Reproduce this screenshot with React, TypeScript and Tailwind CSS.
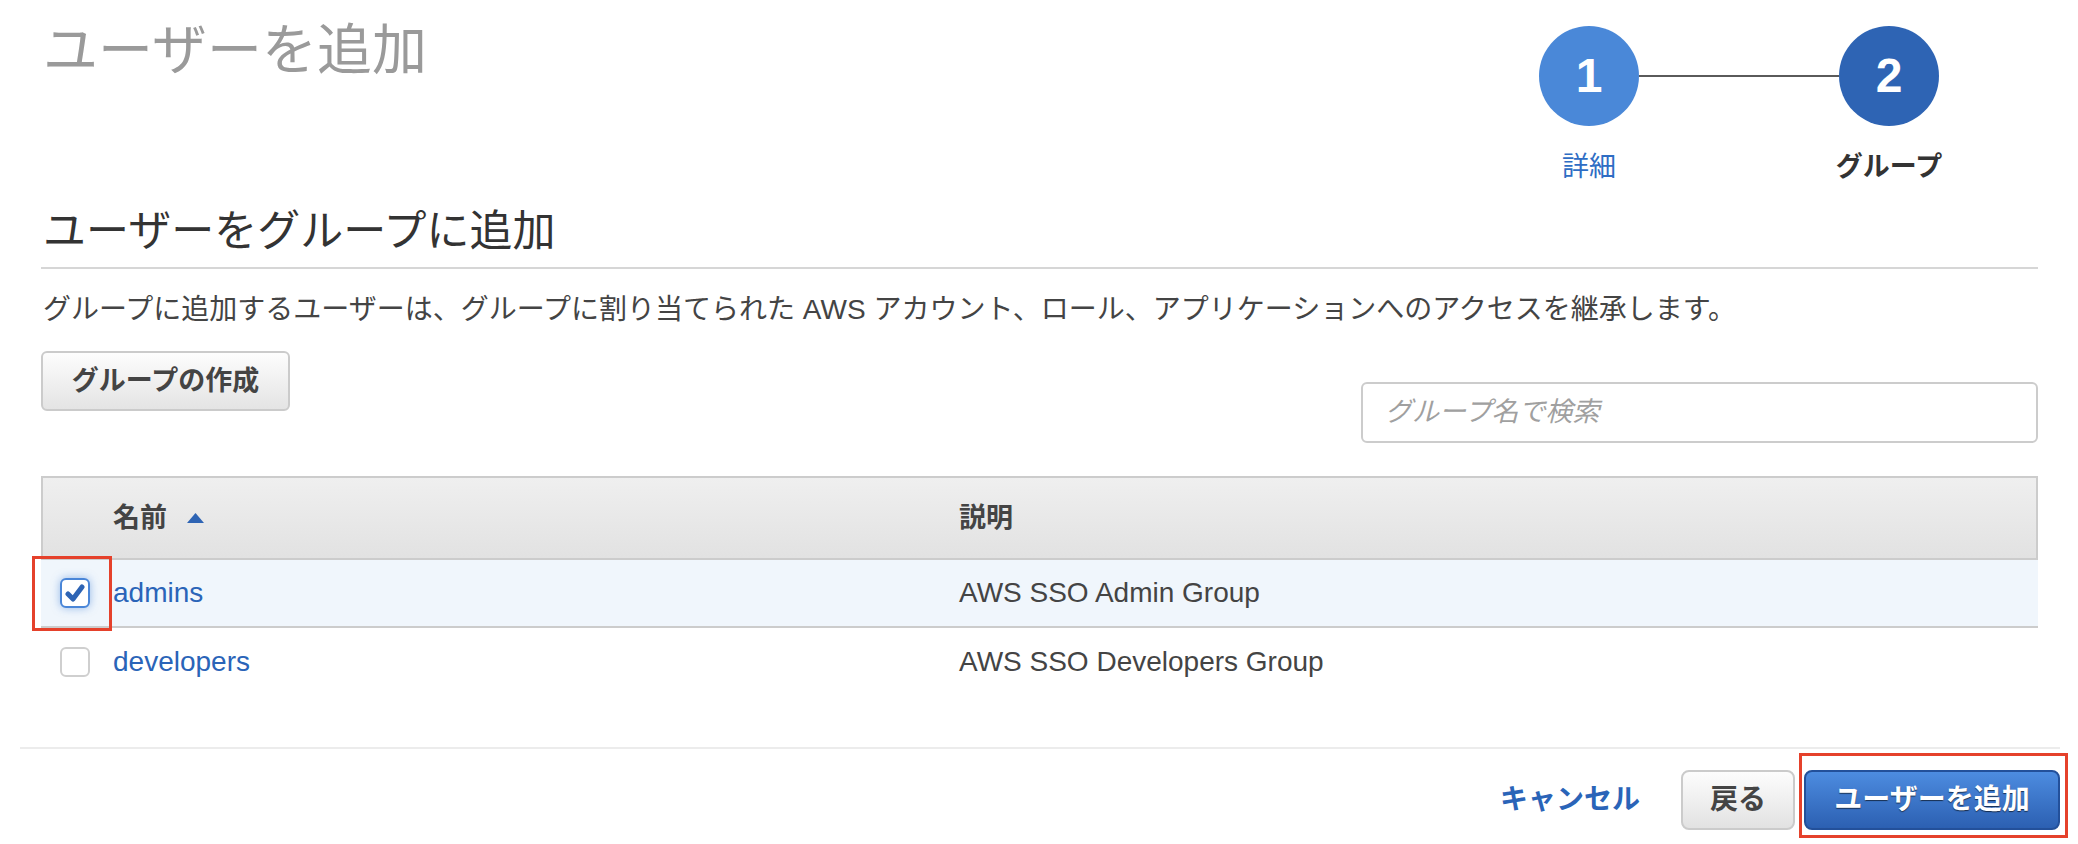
import React from 'react';

const FONT = { fontFamily: '"Liberation Sans", "Noto Sans CJK JP", sans-serif' };

type Group = { name: string; description: string; checked: boolean };

const GROUPS: Group[] = [
  { name: 'admins', description: 'AWS SSO Admin Group', checked: true },
  { name: 'developers', description: 'AWS SSO Developers Group', checked: false },
];

function Stepper() {
  return (
    <div className="mr-[99px] mt-[26px] flex items-start">
      <div className="flex w-[100px] flex-col items-center">
        <div className="flex h-[100px] w-[100px] items-center justify-center rounded-full bg-[#4a88d8] text-[48px] font-bold text-white">
          1
        </div>
        <span className="mt-[25px] whitespace-nowrap text-[27px] leading-[32px] text-[#2e6dc4]">詳細</span>
      </div>
      <div className="mt-[49px] h-[2px] w-[200px] bg-[#5a5a5a]" />
      <div className="flex w-[100px] flex-col items-center">
        <div className="flex h-[100px] w-[100px] items-center justify-center rounded-full bg-[#2e64b4] text-[48px] font-bold text-white">
          2
        </div>
        <span className="mt-[25px] whitespace-nowrap text-[27px] font-bold leading-[32px] text-[#333]">グループ</span>
      </div>
    </div>
  );
}

function Checkbox({ checked }: { checked: boolean }) {
  if (!checked) {
    return <div className="h-[30px] w-[30px] rounded-[6px] border-2 border-[#cfcfcf] bg-white" />;
  }
  return (
    <div className="flex h-[30px] w-[30px] items-center justify-center rounded-[6px] border-2 border-[#4a86d8] bg-white shadow-[0_0_8px_rgba(74,134,216,0.55)]">
      <svg width="20" height="18" viewBox="0 0 20 18" fill="none">
        <path d="M3 10 L8 15 L17 3" stroke="#2e64b4" strokeWidth="5" strokeLinecap="round" strokeLinejoin="round" />
      </svg>
    </div>
  );
}

export default function App() {
  return (
    <div className="h-[844px] w-full overflow-hidden bg-white text-[#444]" style={FONT}>
      <div className="pl-[41px] pr-[40px]">
        {/* Title + wizard steps */}
        <div className="flex items-start justify-between">
          <h1 className="ml-[2px] mt-[18px] text-[55px] leading-[64px] font-normal text-[#9a9a9a]">ユーザーを追加</h1>
          <Stepper />
        </div>

        {/* Section heading */}
        <h2 className="mt-[23px] border-b-2 border-[#d6d6d6] pb-[11px] pl-[2px] text-[43px] leading-[50px] font-normal text-[#333]">
          ユーザーをグループに追加
        </h2>
        <p className="mt-[23px] pl-[2px] text-[28px] leading-[36px] text-[#444]">
          グループに追加するユーザーは、グループに割り当てられた AWS アカウント、ロール、アプリケーションへのアクセスを継承します。
        </p>

        {/* Actions row */}
        <div className="mt-[23px] flex items-start justify-between">
          <button
            type="button"
            className="h-[60px] w-[249px] rounded-[6px] border-2 border-[#cbcbcb] bg-linear-to-b from-[#fdfdfd] to-[#e4e4e4] text-[27px] font-bold text-[#444]"
          >
            グループの作成
          </button>
          <div className="mt-[31px] flex h-[61px] w-[677px] items-center rounded-[6px] border-2 border-[#cccccc] bg-white px-[22px]">
            <span className="text-[27px] italic text-[#a0a0a0]">グループ名で検索</span>
          </div>
        </div>

        {/* Groups table */}
        <div className="mt-[33px]">
          <div className="flex h-[84px] items-center border-2 border-[#cccccc] bg-linear-to-b from-[#efefef] to-[#e2e2e2] text-[27px] font-bold text-[#444]">
            <div className="w-[70px]" />
            <div className="flex w-[846px] items-center gap-[20px]">
              <span>名前</span>
              <svg width="17" height="10" viewBox="0 0 17 10">
                <path d="M0 10 L8.5 0 L17 10 Z" fill="#2e64b4" />
              </svg>
            </div>
            <div className="flex-1">説明</div>
          </div>
          {GROUPS.map((g) => (
            <div
              key={g.name}
              className={
                g.checked
                  ? 'relative flex h-[68px] items-center border-b-2 border-[#cccccc] bg-[#f0f6fc] text-[28px]'
                  : 'relative flex h-[68px] items-center text-[28px]'
              }
            >
              <div className="flex w-[72px] justify-end pr-[23px]">
                <Checkbox checked={g.checked} />
              </div>
              <div className="w-[846px] text-[#2a64b8]">{g.name}</div>
              <div className="flex-1 text-[#444]">{g.description}</div>
              {g.checked && (
                <div className="pointer-events-none absolute -bottom-[5px] -top-[4px] left-[-9px] w-[80px] border-[3px] border-[#e5412b]" />
              )}
            </div>
          ))}
        </div>
      </div>

      {/* Footer */}
      <div className="mt-[51px] pl-[20px] pr-[18px]">
        <div className="h-[2px] bg-[#ececec]" />
        <div className="mt-[21px] flex items-center justify-end">
          <button type="button" className="mr-[41px] text-[28px] font-bold text-[#2a64b8]">
            キャンセル
          </button>
          <button
            type="button"
            className="h-[60px] w-[114px] rounded-[8px] border-2 border-[#cbcbcb] bg-linear-to-b from-[#fdfdfd] to-[#e2e2e2] text-[28px] font-bold text-[#444]"
          >
            戻る
          </button>
          <div className="relative ml-[9px]">
            <button
              type="button"
              className="h-[60px] w-[256px] rounded-[8px] border-2 border-[#23509a] bg-linear-to-b from-[#4d8ce0] to-[#2c60b2] text-[28px] font-bold text-white [text-shadow:0_1px_1px_rgba(0,0,0,0.6)]"
            >
              ユーザーを追加
            </button>
            <div className="pointer-events-none absolute -bottom-[8px] -left-[5px] -right-[8px] -top-[17px] border-[3px] border-[#e5412b]" />
          </div>
        </div>
      </div>
    </div>
  );
}
